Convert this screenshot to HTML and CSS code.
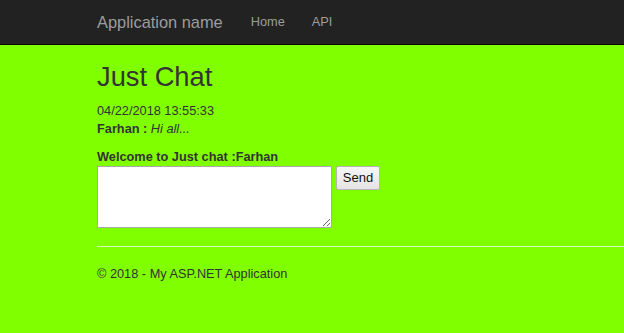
FILE: index.html
```html
<!DOCTYPE html>
<html lang="en">
<head>
    <meta charset="UTF-8">
    <meta name="viewport" content="width=device-width, initial-scale=1.0">
    <title>Just Chat - My ASP.NET Application</title>
    <link rel="stylesheet" href="styles.css">
</head>
<body>
    <header class="navbar">
        <a class="brand" href="#">Application name</a>
        <nav class="nav">
            <a href="#">Home</a>
            <a href="#">API</a>
        </nav>
    </header>

    <main class="body-content">
        <h2>Just Chat</h2>
        <div id="discussion">
            <div class="msg-date">04/22/2018 13:55:33</div>
            <div class="msg"><strong>Farhan :</strong> <em>Hi all...</em></div>
        </div>

        <label for="message" class="welcome">Welcome to Just chat :Farhan</label>
        <div class="send-row">
            <textarea id="message"></textarea>
            <button type="button" id="sendmessage">Send</button>
        </div>

        <hr>
        <footer>
            <p>&copy; 2018 - My ASP.NET Application</p>
        </footer>
    </main>
</body>
</html>
```

FILE: styles.css
```css
body {
    font-family: "Liberation Sans", Arial, sans-serif;
    font-size: 12.75px;
    line-height: 18.2px;
    color: #333;
    margin: 0;
    padding: 0;
    background-color: #80ff00;
}
.navbar {
    display: flex;
    align-items: center;
    height: 44px;
    padding-left: 97px;
    background-color: #222;
    border-bottom: 1px solid #080808;
}
.navbar a {
    color: #9d9d9d;
    text-decoration: none;
}
.brand {
    font-size: 16.4px;
    margin-right: 28px;
}
.nav {
    display: flex;
    gap: 27px;
}
.body-content {
    padding-left: 97px;
}
h2 {
    font-size: 27.3px;
    font-weight: normal;
    line-height: 1.1;
    margin: 17px 0 9.5px;
}
#discussion {
    margin-bottom: 9.6px;
}
.welcome {
    display: block;
    font-weight: bold;
}
.send-row {
    display: flex;
    align-items: flex-start;
    gap: 4px;
}
textarea {
    width: 235px;
    height: 62px;
    box-sizing: border-box;
    margin: 0;
    border: 1px solid #a9a9a9;
    background-color: #fff;
}
button {
    font-family: "Liberation Sans", Arial, sans-serif;
    font-size: 13px;
    width: 44px;
    height: 24px;
    margin: 0;
    padding: 0;
    color: #111;
    background: linear-gradient(#f6f6f6, #e4e4e4);
    border: 1px solid #b5b5b5;
    border-radius: 2px;
}
hr {
    border: 0;
    border-top: 1px solid #d8f7c0;
    margin: 18px 0 18.5px;
}
footer p {
    margin: 0;
}
```
